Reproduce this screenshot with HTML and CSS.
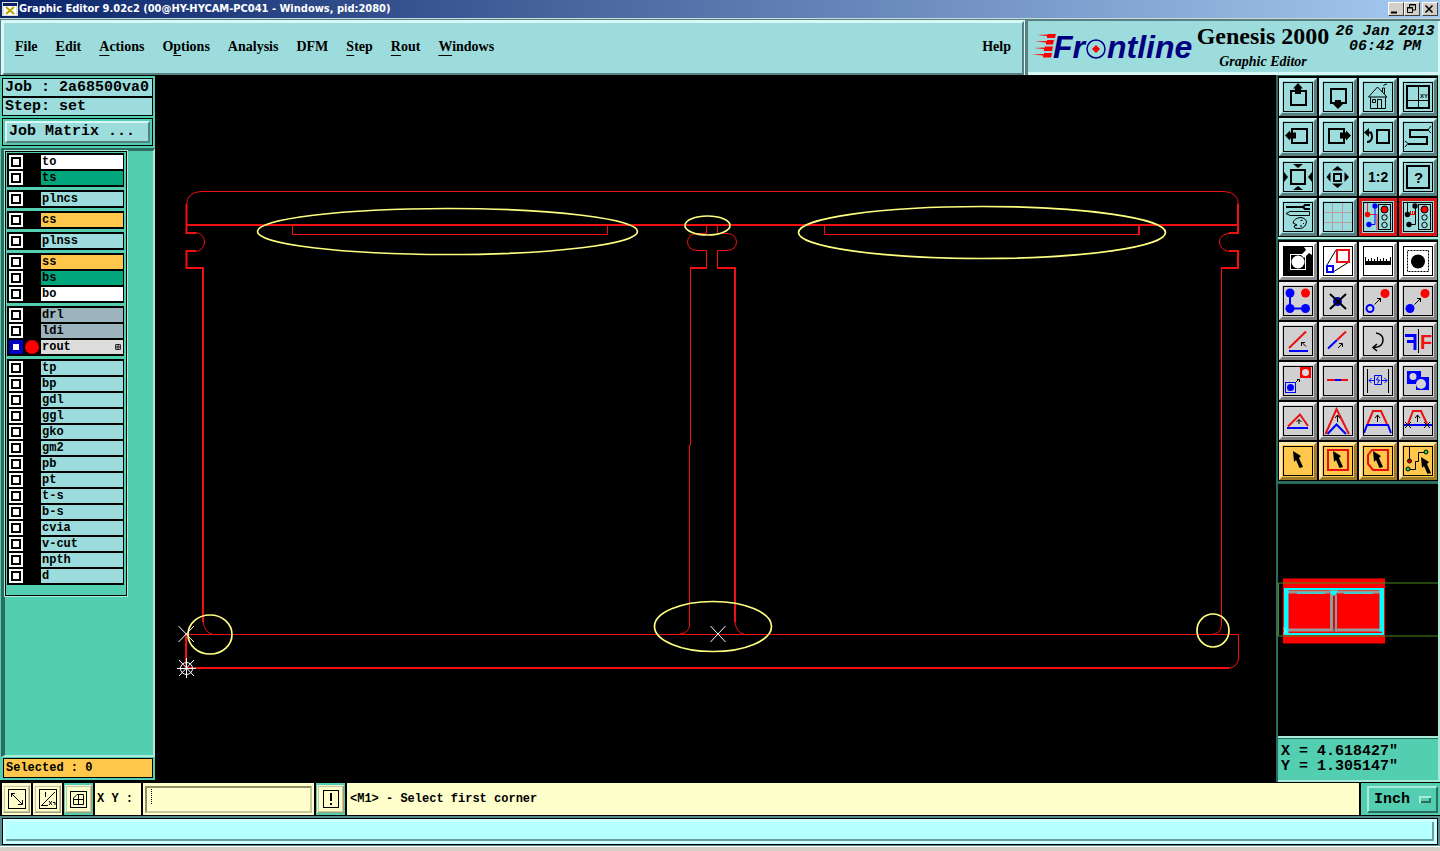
FILE: index.html
```html
<!DOCTYPE html>
<html lang="en">
<head>
    <meta charset="UTF-8">
    <meta name="viewport" content="width=device-width, initial-scale=1.0">
    <title>Graphic Editor 9.02c2</title>
    <link rel="stylesheet" href="styles.css">
</head>
<body>

    <!-- shared icon parts -->
    <svg class="defs" width="0" height="0" aria-hidden="true">
        <defs>
            <path id="cursor" d="M0 0 L8 5 L6 7 L10 16 L6.500 17 L3 9 L1 11 Z"/>
            <path id="arrow" d="M0 6 L6 0 M2.5 0 H6 V3.5" fill="none" stroke="#000"/>
            <path id="up" d="M0 7 V0 M-2.5 3 L0 0 L2.5 3" fill="none" stroke="#000"/>
            <g id="light">
                <rect x="15.5" y="2.5" width="12" height="25" fill="none" stroke="#000"/>
                <circle cx="21.5" cy="7.5" r="3.5" fill="#f00" stroke="#000"/>
                <circle cx="21.5" cy="15.5" r="2.7" fill="none" stroke="#000"/>
                <circle cx="21.5" cy="23" r="2.7" fill="none" stroke="#000"/>
            </g>
        </defs>
    </svg>

    <div class="titlebar">
        <svg class="app-icon" viewBox="0 0 16 14"><rect width="16" height="14" fill="#ddd"/><rect x="1" y="1" width="14" height="3" fill="#0a2060"/><rect x="2" y="4" width="12" height="9" fill="#fff"/><path d="M4 5 L12 12 M12 5 L4 12" stroke="#b5a800" stroke-width="2"/></svg>
        <span class="title">Graphic Editor 9.02c2 (00@HY-HYCAM-PC041 - Windows, pid:2080)</span>
        <button type="button" class="win-btn" aria-label="Minimize"><svg viewBox="0 0 12 10"><path d="M2 8.5 H8" stroke="#000" stroke-width="2"/></svg></button>
        <button type="button" class="win-btn" aria-label="Restore"><svg viewBox="0 0 12 10"><path d="M4.500 3 V.5 H10.500 V6 H8 M4 1 H11 M2.500 3.500 H7.500 V8.500 H2.500 Z M2 4 H8" fill="none" stroke="#000"/></svg></button>
        <button type="button" class="win-btn close" aria-label="Close"><svg viewBox="0 0 12 10"><path d="M2.500 1.500 L9.500 8.500 M9.500 1.500 L2.500 8.500" stroke="#000" stroke-width="1.600"/></svg></button>
    </div>

    <header class="header">
        <nav class="menu">
            <a href="#"><u>F</u>ile</a>
            <a href="#"><u>E</u>dit</a>
            <a href="#"><u>A</u>ctions</a>
            <a href="#">O<u>p</u>tions</a>
            <a href="#">Analysis</a>
            <a href="#">DFM</a>
            <a href="#"><u>S</u>tep</a>
            <a href="#"><u>R</u>out</a>
            <a href="#"><u>W</u>indows</a>
            <a href="#" class="help">Help</a>
        </nav>
        <div class="brand">
            <svg class="logo" viewBox="0 0 162 44" role="img" aria-label="Frontline">
                <g fill="#f00">
                    <path d="M5 9 L16 8.500 V8 H24 L23 12 H15 V10 Z"/>
                    <path d="M3 15.500 L15 15 V14 H22 L21 18.500 H14 V16.500 Z"/>
                    <path d="M2 22 L13 21.500 V20.500 H21 L20 25 H12 V23 Z"/>
                    <path d="M0 28.500 L12 28 V27 H20 L19 31.500 H11 V29.500 Z"/>
                </g>
                <text x="21" y="32">Fr</text>
                <text x="75" y="32">ntline</text>
                <circle cx="64" cy="23" r="9" fill="none" stroke="#008" stroke-width="1.500"/>
                <path d="M64 19 L68 23 L64 27 L60 23 Z" fill="#f00"/>
            </svg>
            <div class="product">
                <h1>Genesis 2000</h1>
                <h2>Graphic Editor</h2>
            </div>
            <div class="clock">26 Jan 2013<br>06:42 PM</div>
        </div>
    </header>

    <main class="workspace">
        <aside class="sidebar">
            <div class="job">
                <div class="job-line">Job : 2a68500va0</div>
                <div class="job-line">Step: set</div>
                <div class="matrix-frame"><button type="button" class="matrix">Job Matrix ...</button></div>
            </div>
            <div class="layer-area">
                <div class="layers">
                    <div class="group">
                        <label class="layer white"><input type="checkbox"><span>to</span></label>
                        <label class="layer green"><input type="checkbox"><span>ts</span></label>
                    </div>
                    <div class="group">
                        <label class="layer"><input type="checkbox"><span>plncs</span></label>
                    </div>
                    <div class="group">
                        <label class="layer orange"><input type="checkbox"><span>cs</span></label>
                    </div>
                    <div class="group">
                        <label class="layer"><input type="checkbox"><span>plnss</span></label>
                    </div>
                    <div class="group">
                        <label class="layer orange"><input type="checkbox"><span>ss</span></label>
                        <label class="layer green"><input type="checkbox"><span>bs</span></label>
                        <label class="layer white"><input type="checkbox"><span>bo</span></label>
                    </div>
                    <div class="group">
                        <label class="layer steel"><input type="checkbox"><span>drl</span></label>
                        <label class="layer steel"><input type="checkbox"><span>ldi</span></label>
                        <label class="layer active"><input type="checkbox" checked><i class="dot"></i><span>rout<svg class="mark" viewBox="0 0 5 5"><path d="M.5 .5 H4.500 V4.500 H.5 Z M2.500 0 V5 M0 2.500 H5" fill="none" stroke="#000" stroke-width=".7"/></svg></span></label>
                    </div>
                    <div class="group">
                        <label class="layer"><input type="checkbox"><span>tp</span></label>
                        <label class="layer"><input type="checkbox"><span>bp</span></label>
                        <label class="layer"><input type="checkbox"><span>gdl</span></label>
                        <label class="layer"><input type="checkbox"><span>ggl</span></label>
                        <label class="layer"><input type="checkbox"><span>gko</span></label>
                        <label class="layer"><input type="checkbox"><span>gm2</span></label>
                        <label class="layer"><input type="checkbox"><span>pb</span></label>
                        <label class="layer"><input type="checkbox"><span>pt</span></label>
                        <label class="layer"><input type="checkbox"><span>t-s</span></label>
                        <label class="layer"><input type="checkbox"><span>b-s</span></label>
                        <label class="layer"><input type="checkbox"><span>cvia</span></label>
                        <label class="layer"><input type="checkbox"><span>v-cut</span></label>
                        <label class="layer"><input type="checkbox"><span>npth</span></label>
                        <label class="layer"><input type="checkbox"><span>d</span></label>
                    </div>
                </div>
            </div>
            <div class="selected">Selected : 0</div>
        </aside>

        <div class="canvas">
            <svg viewBox="155 75 1121 707">
                <g fill="none" stroke="#f01010" stroke-width="1">
                    <path d="M186.500 205 Q187 192 201 191.500 H1224 Q1238 192 1238.500 205"/>
                    <path d="M196 232.500 Q204 234 204.500 242 Q204 250 196 251.500"/>
                    <path d="M292.500 225 V234.500 H607.500 V225 M824.500 225 V234.500 H1138.500 V225"/>
                    <path d="M706.500 225 V233.500 H697 Q688 234 687.500 242 Q688 250 697 250.500 H706.500 V268 H690.500 V445 H689.500 V625 Q689 633 680 634"/>
                    <path d="M717.500 225 V233.500 H727 Q736 234 736.500 242 Q736 250 727 250.500 H717.500 V268"/>
                    <path d="M1229 233.500 Q1220 234 1219.500 242 Q1220 250 1229 251.500"/>
                    <path d="M1221.500 268 V625 Q1221 634 1211 634.500"/>
                    <path d="M203 620 Q204 633 213 634.500 M735 622 Q736 633 745 634.500"/>
                    <path d="M186 634.500 H1238.500 V658 Q1238 667 1229 668"/>
                </g>
                <g fill="none" stroke="#f01010" stroke-width="2">
                    <path d="M186 225 H1238 M186.500 204 V233 H196 M196 251 H186.500 V268 H203 V622"/>
                    <path d="M717 268 H735 V622 M690 268 H707"/>
                    <path d="M1238 204 V233 H1229 M1229 251 H1238 V268 H1221 M1139 225 V235"/>
                    <path d="M186 634 V668 H1229"/>
                </g>
                <g fill="none" stroke="#ffff80" stroke-width="1.700">
                    <ellipse cx="447.500" cy="231.500" rx="190" ry="23"/>
                    <ellipse cx="707.500" cy="225.500" rx="22.500" ry="9.500"/>
                    <ellipse cx="982" cy="232.500" rx="183.500" ry="26"/>
                    <ellipse cx="210" cy="634.500" rx="22" ry="19.500"/>
                    <ellipse cx="713" cy="626.500" rx="58.500" ry="25"/>
                    <ellipse cx="1213" cy="630.500" rx="16" ry="16.500"/>
                </g>
                <g fill="none" stroke="#fff">
                    <path d="M178.500 626 L194 642 M194 626 L178.500 642"/>
                    <path d="M710.500 626 L725.500 642 M725.500 626 L710.500 642"/>
                    <path d="M179 660 L194 676 M194 660 L179 676 M177 668.500 H196 M186.500 658 V678"/>
                    <circle cx="186.500" cy="668.500" r="6"/>
                </g>
            </svg>
        </div>

        <aside class="tools">
            <div class="tool-grid view">
                <button type="button" aria-label="Pan up"><svg viewBox="0 0 30 30"><rect x="8" y="9" width="15" height="14" class="k2"/><path d="M15 1 L20 6.500 H18 V12 H12 V6.500 H10 Z"/></svg></button>
                <button type="button" aria-label="Pan down"><svg viewBox="0 0 30 30"><rect x="8" y="7" width="15" height="14" class="k2"/><path d="M15 27 L20 22 H18 V18 H12 V22 H10 Z"/></svg></button>
                <button type="button" aria-label="Home"><svg viewBox="0 0 30 30"><path class="k1" d="M5.500 15 L14.500 5 L24 15 Z M7.500 15 V26.500 H22.500 V15 M14.500 26 V17.500 H18.500 V26 M9.500 17.500 H12.500 V20.500 H9.500 Z M19.500 10 V6 H21.500 V12 M20.500 4 Q21 2 24 2"/></svg></button>
                <button type="button" aria-label="Zoom to XY"><svg viewBox="0 0 30 30"><rect x="4" y="4" width="22" height="22" class="k2"/><path class="k1" d="M15.500 4 V26 M4 18.500 H26"/><text x="17" y="16" font-size="6">XY</text></svg></button>

                <button type="button" aria-label="Pan left"><svg viewBox="0 0 30 30"><rect x="9" y="7" width="15" height="14" class="k2"/><path d="M2 13.500 L7 8.500 V10.500 H13 V16.500 H7 V18.500 Z"/></svg></button>
                <button type="button" aria-label="Pan right"><svg viewBox="0 0 30 30"><rect x="6" y="7" width="15" height="14" class="k2"/><path d="M28 13.500 L23 8.500 V10.500 H17 V16.500 H23 V18.500 Z"/></svg></button>
                <button type="button" aria-label="Previous view"><svg viewBox="0 0 30 30"><rect x="14" y="8" width="12" height="13" class="k2"/><path class="k2" d="M4 10.500 H8 Q10 15 8 18 Q7 20 4 20"/><path d="M1 10.500 L6 6 V15 Z"/></svg></button>
                <button type="button" aria-label="Serpentine"><svg viewBox="0 0 30 30"><path class="k2" d="M25 8 H7 V15 H24 V22 H5"/><path class="k1" d="M28 4 L25 8 L28 11 M2 19 L5 21.500 L2 25"/></svg></button>

                <button type="button" aria-label="Zoom out"><svg viewBox="0 0 30 30"><rect x="8" y="8" width="14" height="14" class="k2"/><path d="M10 2 H20 L15 6 Z M10 28 H20 L15 24 Z M1 10 V20 L5 15 Z M29 10 V20 L25 15 Z"/></svg></button>
                <button type="button" aria-label="Zoom in"><svg viewBox="0 0 30 30"><rect x="11" y="12" width="7" height="7" class="k2"/><path d="M9 8.500 H20 L14.500 4 Z M9 21.500 H20 L14.500 26 Z M7.500 10 V20 L3.500 15 Z M21.500 10 V20 L26 15 Z"/></svg></button>
                <button type="button" aria-label="Zoom 1:2"><svg viewBox="0 0 30 30"><text x="5" y="20" font-size="14" font-weight="bold">1:2</text></svg></button>
                <button type="button" aria-label="Query"><svg viewBox="0 0 30 30"><rect x="4" y="4" width="22" height="22" class="k2"/><text x="11" y="21" font-size="15">?</text></svg></button>

                <button type="button" aria-label="Setup"><svg viewBox="0 0 30 30"><path class="k2" d="M3 5 H20 M27 3 H22 L20 5 L22 7 H27"/><path class="k1" d="M3 11.500 L7 9.500 H26.500 V13.500 H7 Z"/><path class="k1" d="M10 21 Q11 16 18 15.500 Q25 17 23 22 Q21 27 15 26.500 Q11 27 11 24 L14 23 Z M17.500 18.500 h2 M20 21.500 h1 M17 24 h2"/></svg></button>
                <button type="button" aria-label="Grid"><svg viewBox="0 0 30 30"><path d="M9.500 1 V29 M19.500 1 V29 M1 10.500 H29 M1 20.500 H29" stroke="#b89c9c"/></svg></button>
                <button type="button" class="alert" aria-label="Snap net"><svg viewBox="0 0 30 30"><path d="M4.500 1 V12.500 H14 V28" fill="none" stroke="#e22"/><path d="M12 4 V22.500 H6" fill="none" stroke="#00f"/><circle cx="4.500" cy="12.500" r="2.700" fill="#f00"/><circle cx="12" cy="4" r="2.700" fill="#00f"/><circle cx="6" cy="22.500" r="2.700" fill="#00f"/><use href="#light"/></svg></button>
                <button type="button" class="alert" aria-label="Snap rules"><svg viewBox="0 0 30 30"><path d="M4.500 1 V12.500 M12.500 4 V22.500 H6" class="k1"/><path d="M5 12.500 H12 M7.500 12 V9 M9.500 12 V9 M11.500 12 V9" stroke="#f00"/><circle cx="4.500" cy="12.500" r="2.700"/><circle cx="12" cy="4" r="2.700"/><circle cx="6" cy="22.500" r="2.700"/><use href="#light"/></svg></button>
            </div>

            <div class="tool-grid edit">
                <button type="button" class="paper" aria-label="Select feature"><svg viewBox="0 0 30 30"><rect x="1" y="1" width="28" height="28"/><rect x="7.500" y="8.500" width="15" height="15" fill="none" stroke="#fff"/><circle cx="15" cy="16" r="6.500" fill="#fff"/><path d="M18 9 L23 4 L21 1 H29 V9 L26 7 L21 12 Z" fill="#fff"/></svg></button>
                <button type="button" class="paper" aria-label="Resize"><svg viewBox="0 0 30 30"><path class="k1" d="M4 19 L13 4 M10 26 L26 16"/><rect x="14" y="4" width="12" height="12" class="r2"/><rect x="4" y="20" width="6" height="6" class="b2"/></svg></button>
                <button type="button" class="paper" aria-label="Measure"><svg viewBox="0 0 30 30"><path d="M2 15 H28 V19 H2 Z"/><path class="k1" d="M2.500 11 V15 M5.500 13 V15 M8.500 12 V15 M11.500 13 V15 M14.500 11 V15 M17.500 13 V15 M20.500 12 V15 M23.500 13 V15 M27.500 11 V15"/></svg></button>
                <button type="button" class="paper" aria-label="Highlight"><svg viewBox="0 0 30 30"><rect x="4.500" y="4.500" width="21" height="21" class="k1" stroke-dasharray="2 1"/><circle cx="15" cy="15.500" r="7"/></svg></button>

                <button type="button" aria-label="Move points"><svg viewBox="0 0 30 30"><path class="b2" d="M7 7 V22.500 H22"/><g fill="#00f"><circle cx="7" cy="7" r="4.500"/><circle cx="7" cy="22.500" r="4.500"/><circle cx="22.500" cy="22.500" r="4.500"/></g><circle cx="22.500" cy="7" r="4.500" fill="#f00"/></svg></button>
                <button type="button" aria-label="Delete"><svg viewBox="0 0 30 30"><circle cx="14.500" cy="15.500" r="4.500" fill="#00c"/><path class="k2" d="M7 8 L23 23 M23 8 L7 23"/></svg></button>
                <button type="button" aria-label="Move"><svg viewBox="0 0 30 30"><circle cx="22" cy="7.500" r="4.500" fill="#f00"/><circle cx="7" cy="22.500" r="3.500" class="b2"/><use href="#arrow" x="11.500" y="12.500"/></svg></button>
                <button type="button" aria-label="Copy"><svg viewBox="0 0 30 30"><circle cx="22" cy="7.500" r="4.500" fill="#f00"/><circle cx="7" cy="22.500" r="4.500" fill="#00f"/><use href="#arrow" x="11.500" y="12.500"/></svg></button>

                <button type="button" aria-label="Rotate line"><svg viewBox="0 0 30 30"><path class="r2" d="M6 22 L23 5.500"/><path class="b2" d="M6 25 H25"/><path class="k1" d="M23 20.500 L19 16.500 M18.500 20 V16.500 H22"/></svg></button>
                <button type="button" aria-label="Extend line"><svg viewBox="0 0 30 30"><path class="b2" d="M5 22.500 L14 14"/><path class="r2" d="M14 14 L23 5.500"/><path class="k1" d="M15 22 L19 18 M16 17.500 H19.500 V21"/></svg></button>
                <button type="button" aria-label="Rotate"><svg viewBox="0 0 30 30"><path d="M13 7 Q20 8 20 14 Q20 21 11 21.500 M14 18 L10 21.500 L14 25" fill="none" stroke="#000" stroke-width="1.500"/></svg></button>
                <button type="button" aria-label="Mirror"><svg viewBox="0 0 30 30"><path class="k1" d="M15.500 3 V27"/><text x="17" y="23" font-size="20" fill="#e11">F</text><path d="M2 9.500 H12 V24 M4 15.500 H12" fill="none" stroke="#00f" stroke-width="3"/></svg></button>

                <button type="button" aria-label="Copy to layer"><svg viewBox="0 0 30 30"><rect x="17" y="1" width="11" height="11" fill="#f00"/><circle cx="22.500" cy="6.500" r="3.500" fill="#ddd"/><rect x="2.500" y="16.500" width="10" height="10" fill="none" stroke="#00f"/><circle cx="7.500" cy="21.500" r="3.500" fill="#00f"/><path class="k1" d="M13 16 L16 13 M14 13.500 H16.500 V16"/></svg></button>
                <button type="button" aria-label="Break line"><svg viewBox="0 0 30 30"><path class="r2" d="M4 14 H25"/><path class="b2" d="M12 14 H18"/></svg></button>
                <button type="button" aria-label="Spacing"><svg viewBox="0 0 30 30"><path class="k1" d="M4.500 3 V27 M25.500 3 V27"/><path d="M11.500 9.500 H18.500 V18.500 H11.500 Z M11 14.500 H6 M8.500 12 L6 14.500 L8.500 17 M19 14.500 H24 M21.500 12 L24 14.500 L21.500 17 M15.500 10.500 L13.500 14 H16.500 L14.500 17.500" fill="none" stroke="#00f"/></svg></button>
                <button type="button" aria-label="Polarity"><svg viewBox="0 0 30 30"><path d="M4 5 H18 V11 H26 V24 H13 V18 H4 Z" fill="#00f"/><circle cx="10" cy="10.500" r="3.500" fill="#d4d4d4"/><circle cx="18" cy="18" r="5" fill="#d4d4d4"/></svg></button>

                <button type="button" aria-label="Move triangle"><svg viewBox="0 0 30 30"><path class="r2" d="M5 20.500 L17 8.500 L25 20"/><path class="b2" d="M4 22 H25"/><path class="k1" d="M16 18 V13.500 M13.500 16 L16 13.500 L18.500 16"/></svg></button>
                <button type="button" aria-label="Stretch corner"><svg viewBox="0 0 30 30"><path class="r2" d="M2.500 28 L13.500 3 L26 28"/><path class="b2" d="M4.500 28 L13.500 18.500 L23 28"/><use href="#up" x="14.500" y="9"/></svg></button>
                <button type="button" aria-label="Stretch segment"><svg viewBox="0 0 30 30"><path class="b2" d="M1 27 L4 19 H25 L28 27"/><path class="r2" d="M4.500 18 L10 5 H18 L24 18"/><use href="#up" x="14.500" y="9"/></svg></button>
                <button type="button" aria-label="Shift segment"><svg viewBox="0 0 30 30"><path class="b2" d="M1 19 H29"/><path class="r2" d="M5 18 L10 5 H18 L24 18"/><path class="k1" d="M2 16 L8 22 M8 16 L2 22 M21 16 L27 22 M27 16 L21 22"/><use href="#up" x="14.500" y="9"/></svg></button>

                <button type="button" class="pick" aria-label="Select"><svg viewBox="0 0 30 30"><use href="#cursor" x="10" y="5"/></svg></button>
                <button type="button" class="pick" aria-label="Select by box"><svg viewBox="0 0 30 30"><rect x="5" y="4" width="20" height="20" class="r2"/><use href="#cursor" x="10" y="5"/></svg></button>
                <button type="button" class="pick" aria-label="Select by polygon"><svg viewBox="0 0 30 30"><path class="r2" d="M9 4 H25 V24 H10 L5 18 V9 Z"/><use href="#cursor" x="10" y="5"/></svg></button>
                <button type="button" class="pick" aria-label="Select net"><svg viewBox="0 0 30 30"><path class="k1" d="M6.500 1 V14 M5 23.500 H12.500 V15.500 H15.500 V6.500 H22"/><circle cx="6.500" cy="15" r="2" fill="#d00" stroke="#000"/><circle cx="5" cy="23" r="2" fill="#2d4" stroke="#000"/><circle cx="23" cy="6" r="2" fill="#2d4" stroke="#000"/><use href="#cursor" x="18" y="11"/></svg></button>
            </div>

            <div class="overview">
                <svg viewBox="0 0 160 251">
                    <rect x="5" y="94" width="102" height="65" fill="#f00"/>
                    <rect x="7" y="104.500" width="98" height="45" fill="none" stroke="#0ff" stroke-width="2"/>
                    <path d="M10 107.500 H103 M10 145.500 H103 M53.500 107 V147" stroke="#999" stroke-width="3"/>
                    <path d="M8.500 105 V149 M103.500 105 V147" stroke="#0ff" stroke-width="4"/>
                    <path d="M19 108.500 H47 M66 108.500 H95" stroke="#4cc" stroke-width="2"/>
                    <path d="M58 110 V147" stroke="#999" stroke-width="2"/>
                    <path d="M56 108 V147" stroke="#822"/>
                    <path d="M52 106 H60 L57 111 H54 Z" fill="#0ff"/>
                    <path d="M160 98.500 H.5 V151.500 H160" fill="none" stroke="#4c8a1c"/>
                    <path d="M5 143 L9 150 M5 150 L9 143" stroke="#fff" stroke-dasharray="1 1"/>
                </svg>
            </div>
            <div class="coords">X = 4.618427"<br>Y = 1.305147"</div>
        </aside>
    </main>

    <div class="command">
        <div class="cell"><button type="button" class="cmd-btn" aria-label="Diagonal"><svg viewBox="0 0 18 20"><rect x=".5" y=".5" width="17" height="19" class="k1"/><path class="k1" d="M3 4 L14 15 M3.500 8 V4.500 H7 M10 15.500 H14.500 V11"/></svg></button></div>
        <div class="cell"><button type="button" class="cmd-btn" aria-label="Angle"><svg viewBox="0 0 18 20"><rect x=".5" y=".5" width="17" height="19" class="k1"/><path class="k1" d="M2 17 L16 3 M2 16.500 H9 M6.500 3 V8 M10 12 L13 16 M13 12 L10 16 M14 13.500 H16 V16"/></svg></button></div>
        <div class="cell teal"><button type="button" class="cmd-btn" aria-label="Grid snap"><svg viewBox="0 0 18 20"><rect x=".5" y="2.500" width="16" height="16" class="k1"/><path class="k1" d="M3.500 9 L7 5.500 H13.500 V15.500 H3.500 Z M8.500 5 V16 M3 10.500 H14"/></svg></button></div>
        <label class="cell xy" for="xy">X Y :</label>
        <div class="cell entry"><input type="text" id="xy"></div>
        <div class="cell teal"><button type="button" class="cmd-btn" aria-label="Confirm"><svg viewBox="0 0 18 20"><rect x="1.500" y="1.500" width="15" height="17" class="k1"/><path d="M8 4 H10 V12 H8 Z M8 14 H10 V16 H8 Z"/></svg></button></div>
        <div class="cell prompt">&lt;M1&gt; - Select first corner</div>
        <div class="cell unit">
            <select aria-label="Units"><option>Inch</option><option>MM</option></select>
        </div>
    </div>

    <div class="status"><div class="status-line"></div></div>

</body>
</html>
```
FILE: styles.css
```css
* {
    box-sizing: border-box;
}

body {
    margin: 0;
    height: 100vh;
    display: flex;
    flex-direction: column;
    background: #d4d0c8;
    color: #000;
    font-family: "Liberation Mono", monospace;
    font-weight: bold;
    overflow: hidden;
}

button, input, select {
    margin: 0;
    padding: 0;
    color: #000;
    font: inherit;
    border-radius: 0;
}

svg {
    display: block;
}

.defs {
    position: absolute;
}

/* Title bar */
.titlebar {
    display: flex;
    align-items: center;
    height: 18px;
    padding: 0 2px;
    background: linear-gradient(to right, #0a246a, #a6caf0);
}

.app-icon {
    width: 16px;
    height: 14px;
}

.title {
    flex: 1;
    padding-left: 1px;
    color: #fff;
    font-family: "DejaVu Sans Condensed", "DejaVu Sans", sans-serif;
    font-size: 11px;
    line-height: 18px;
}

.win-btn {
    width: 16px;
    height: 14px;
    background: #d4d0c8;
    border: 1px solid;
    border-color: #fff #404040 #404040 #fff;
}

.win-btn svg {
    width: 12px;
    height: 10px;
}

.close {
    margin-left: 2px;
}

/* Header */
.header {
    display: flex;
    height: 57px;
    background: #588080;
    border-top: 1px solid #c8dcdc;
}

.menu, .brand {
    display: flex;
    background: #9cdcdc;
}

.menu {
    flex: 1;
    align-items: center;
    gap: 18px;
    margin: 2px 2px 0 2px;
    padding: 0 11px 2px 11px;
    border: 2px solid;
    border-color: #d8f8f8 #588080 #588080 #d8f8f8;
    outline: 1px solid #d8f8f8;
    font-family: "Liberation Serif", serif;
    font-size: 14px;
}

.menu a {
    color: #000;
    text-decoration: none;
}

.menu u {
    text-underline-offset: 4px;
}

.help {
    margin-left: auto;
}

.brand {
    width: 412px;
    margin: 2px 0 0 2px;
    padding-left: 4px;
    border-right: 2px solid #d8f8f8;
    border-bottom: 3px solid #d8f8f8;
}

.logo {
    width: 162px;
    height: 44px;
    margin-top: 5px;
    overflow: visible;
}

.logo text {
    fill: #000080;
    font-family: "Liberation Sans", sans-serif;
    font-size: 32px;
    font-style: italic;
}

.product {
    width: 138px;
    padding-top: 1px;
    text-align: center;
    font-family: "Liberation Serif", serif;
    white-space: nowrap;
}

.product h1 {
    margin: 0;
    font-size: 24px;
    line-height: 28px;
}

.product h2 {
    margin: 0;
    font-size: 14px;
    line-height: 24px;
    font-style: italic;
}

.clock {
    flex: 1;
    padding-top: 3px;
    font-size: 15px;
    line-height: 15px;
    font-style: italic;
    text-align: center;
    white-space: nowrap;
}

/* Workspace */
.workspace {
    flex: 1;
    display: flex;
    min-height: 0;
    background: #000;
}

.sidebar {
    display: flex;
    flex-direction: column;
    width: 155px;
    margin: 1px 0 2px;
    padding-left: 1px;
    background: #54ceb0;
}

.job {
    padding: 2px 2px 2px 1px;
}

.job-line {
    height: 19px;
    padding-left: 2px;
    background: #9cdcdc;
    border: 1px solid #000;
    font-size: 15px;
    line-height: 17px;
    white-space: nowrap;
}

.matrix-frame {
    margin-top: 2px;
    padding: 2px;
    border: 1px solid #000;
}

.matrix {
    display: block;
    width: 100%;
    height: 22px;
    padding-left: 2px;
    background: #9cdcdc;
    border: 2px solid;
    border-color: #d8f8f8 #588080 #588080 #d8f8f8;
    font-size: 15px;
    line-height: 18px;
    text-align: left;
}

.layer-area {
    flex: 1;
    min-height: 0;
    border: solid;
    border-width: 3px 2px 2px 4px;
    border-color: #2c6c60 #a8ecd8 #a8ecd8 #2c6c60;
}

.layers {
    display: flex;
    flex-direction: column;
    gap: 3px;
    width: 122px;
    padding: 1px 2px 10px 1px;
    border: 1px solid #000;
    outline: 1px solid #a8ecd8;
}

.group {
    padding: 1px 1px 1px 2px;
    background: #000;
}

.layer {
    display: flex;
    align-items: center;
    height: 16px;
    font-size: 12px;
}

.layer input {
    appearance: none;
    width: 14px;
    height: 14px;
    background: #fff;
    border: 2px solid #fff;
    outline: 2px solid #000;
    outline-offset: -4px;
}

.layer input:checked {
    border-color: #0000c0;
    outline-color: #0000c0;
}

.dot {
    width: 14px;
    height: 14px;
    margin-left: 2px;
    border-radius: 50%;
    background: #f00;
}

.layer span {
    display: flex;
    align-items: center;
    justify-content: space-between;
    width: 82px;
    height: 14px;
    margin-left: auto;
    padding: 0 2px 0 1px;
    background: #9cdcdc;
    line-height: 14px;
}

.mark {
    width: 6px;
    height: 6px;
}

.white span {
    background: #fff;
}

.green span {
    background: #00a57c;
}

.orange span {
    background: #ffc84c;
}

.steel span {
    background: #9cb4be;
}

.active span {
    background: #dcdcdc;
}

.selected {
    height: 20px;
    margin: 1px 2px 2px 2px;
    padding-left: 2px;
    background: #ffc84c;
    border: 1px solid #000;
    font-size: 12px;
    line-height: 18px;
}

.canvas {
    flex: 1;
    min-width: 0;
}

.canvas svg {
    width: 100%;
    height: 100%;
}

/* Right tool panel */
.tools {
    display: flex;
    flex-direction: column;
    width: 164px;
    padding-left: 2px;
    background: #2c6c60;
    border-right: 2px solid #a8ecd8;
}

.tool-grid {
    display: grid;
    grid-template-columns: repeat(4, 1fr);
    gap: 2px;
    padding: 2px 1px 1px;
    margin-top: 1px;
    background: #000;
}

.view {
    border-bottom: 2px solid #a8ecd8;
}

.tool-grid button {
    height: 38px;
    background: #9cdcdc;
    border: 3px solid;
    border-color: #c8f0f0 #588080 #588080 #c8f0f0;
    display: flex;
    align-items: center;
    justify-content: center;
}

.tool-grid svg {
    width: 30px;
    height: 30px;
    flex: none;
    outline: 1px solid #000;
    outline-offset: -1px;
    font-family: "Liberation Sans", sans-serif;
}

.tool-grid .alert {
    border-color: #d81818;
}

.edit button {
    background: #d0d0d0;
    border-color: #ececec #808080 #808080 #ececec;
}

.edit .paper {
    background: #fff;
    border-color: #fff #909090 #909090 #fff;
}

.edit .pick {
    background: #ffc84c;
    border-color: #ffe8a8 #a07c28 #a07c28 #ffe8a8;
}

.k1, .k2, .r2, .b2 {
    fill: none;
    stroke: #000;
    stroke-width: 1;
}

.k2 {
    stroke-width: 2;
}

.r2 {
    stroke: #e81010;
    stroke-width: 2;
}

.b2 {
    stroke: #00f;
    stroke-width: 2;
}

.overview {
    flex: 1;
    min-height: 0;
    margin-top: 3px;
    background: #000;
    border-bottom: 2px solid #a8ecd8;
}

.overview svg {
    width: 100%;
    height: 100%;
}

.coords {
    height: 44px;
    padding: 5px 0 0 3px;
    background: #54ceb0;
    border-top: 1px solid #2c6c60;
    border-bottom: 2px solid #a8ecd8;
    font-size: 15px;
    line-height: 15px;
}

/* Command line */
.command {
    display: flex;
    gap: 2px;
    height: 34px;
    padding: 1px 0 1px 2px;
    background: #000;
    font-size: 12px;
}

.cell {
    display: flex;
    align-items: center;
    padding: 1px;
    background: #ffffcc;
}

.teal, .unit {
    background: #54ceb0;
}

.cmd-btn {
    display: flex;
    align-items: center;
    justify-content: center;
    width: 27px;
    height: 28px;
    background: #ffffcc;
    border: 2px solid;
    border-color: #f4f4d0 #a0a078 #a0a078 #f4f4d0;
    outline: 1px solid #c8c8a0;
    outline-offset: -2px;
}

.cmd-btn svg {
    flex: none;
    width: 18px;
    height: 20px;
}

.xy {
    width: 46px;
    padding-left: 2px;
    white-space: nowrap;
}

.entry {
    width: 171px;
    padding: 2px;
}

.entry input {
    width: 100%;
    height: 27px;
    background: repeating-linear-gradient(#000 0 1px, #ffffcc 1px 2px) 4px 1px / 1px 15px no-repeat, #ffffcc;
    border: 2px solid;
    border-color: #909068 #c8c8a0 #c8c8a0 #909068;
    padding: 0 4px;
}

.prompt {
    flex: 1;
    padding-left: 3px;
}

.unit {
    width: 79px;
    padding: 2px 2px 2px 6px;
}

.unit select {
    appearance: none;
    width: 100%;
    height: 27px;
    padding-left: 5px;
    border: 2px solid;
    border-color: #a8ecd8 #2c6c60 #2c6c60 #a8ecd8;
    background:
        linear-gradient(#54ceb0, #54ceb0) right 7px top 10px / 8px 3px no-repeat,
        linear-gradient(#2c6c60, #2c6c60) right 5px top 10px / 10px 5px no-repeat,
        linear-gradient(#a8ecd8, #a8ecd8) right 5px top 8px / 12px 7px no-repeat,
        #54ceb0;
    font-size: 15px;
}

/* Message line */
.status {
    height: 31px;
    padding: 2px;
    background: #588c8c;
    border-bottom: 1px solid #fff;
    margin-bottom: 4px;
}

.status-line {
    height: 27px;
    background: #b4ffff;
    border: 1px solid #000;
    box-shadow: inset 0 0 0 3px #ccffff, inset -5px -5px 0 #68a0a0;
}
```
